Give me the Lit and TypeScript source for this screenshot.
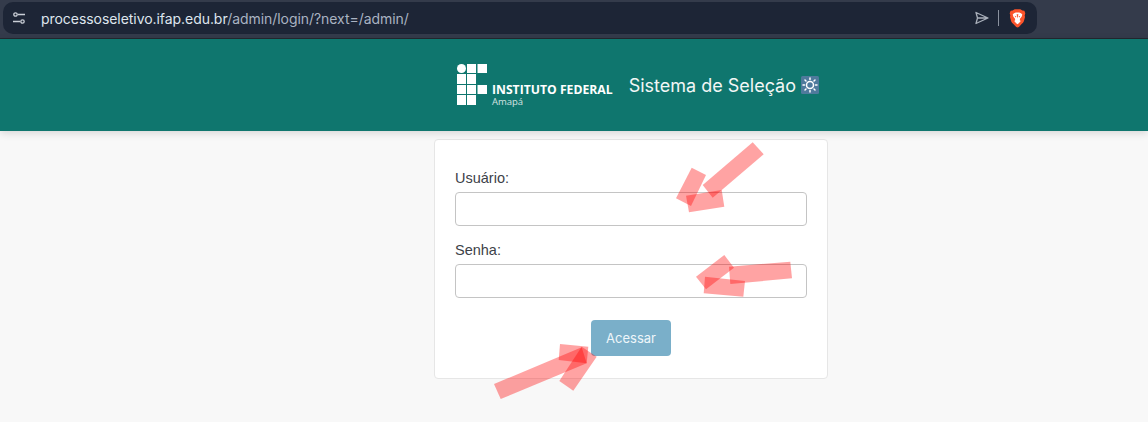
import { LitElement, html, css, svg } from "lit";
import { customElement } from "lit/decorators.js";

const arrows: string[] = [
  "752.7,142.3 763.7,154.3 712.7,197.7 702.7,185",
  "691.7,167.7 706,175 691,206 676,198.3",
  "686,195.7 721.7,190 724.3,206.7 689,212.3",
  "729,266.7 790.3,261.7 792,278.3 730.3,284",
  "724.3,255 734,267.7 706,289.3 696,276.7",
  "705,276.7 745,281 743.3,296.7 703.7,293.3",
  "494,384 581.7,347.3 586.7,363.3 500.7,399",
  "560,344 588.3,346.7 586.7,363.3 558.7,360",
  "581.7,346.7 596.7,356.7 573.3,390.7 559.3,381",
];

@customElement("app-root")
export class AppRoot extends LitElement {
  static styles = css`
    :host { display: block; position: relative; width: 1148px; height: 422px; overflow: hidden; background: #f8f8f8; font-family: Inter, "Liberation Sans", sans-serif; }
    .chrome { background: #343b4b; padding: 2px 111px 0 3px; box-sizing: border-box; border-bottom: 1px solid #23282f; height: 39px; }
    .pill { height: 32px; background: #1d2536; border-radius: 10px; display: flex; align-items: center; padding: 0 11px 0 10px; font-size: 14px; letter-spacing: -.055px; color: #aab3c2; }
    .tune { width: 12px; height: 14px; margin-right: 16px; flex: none; }
    .host { color: #dfe5ee; }
    .url { flex: 1; white-space: nowrap; }
    .send { width: 14px; height: 14px; flex: none; }
    .sep { width: 1px; height: 16px; background: #8a919e; margin: 0 10px 0 9px; flex: none; }
    .brave { width: 17px; height: 19px; flex: none; }
    header { height: 92px; background: #0f766e; display: flex; align-items: center; justify-content: center; gap: 16px; box-shadow: 0 2px 8px rgba(0,0,0,.14); padding-left: 128px; box-sizing: border-box; position: relative; }
    .logo { display: flex; align-items: flex-start; gap: 5px; color: #fff; margin-bottom: 1px; }
    .logo-mark { width: 30px; height: 41px; display: block; }
    .logo-text { display: flex; flex-direction: column; height: 24px; margin: 20px 0 -3px; font-family: "Open Sans", sans-serif; }
    .if { font-weight: 700; font-size: 12.2px; line-height: 12px; white-space: nowrap; }
    .st { font-size: 9.5px; line-height: 12px; opacity: .8; }
    .title { display: flex; align-items: center; gap: 5px; font-size: 18px; color: #f2f7f6; white-space: nowrap; }
    .gear { width: 18px; height: 18px; display: block; }
    main { display: flex; justify-content: center; padding: 8px 0 0 114px; }
    .card { width: 394px; height: 240px; box-sizing: border-box; background: #fff; border: 1px solid #e6e6e6; border-radius: 4px; padding: 28px 20px 0; display: flex; flex-direction: column; }
    label { line-height: 20px; color: #3d4248; margin-bottom: 4px; font-family: "Liberation Sans", sans-serif; font-size: 14.5px; }
    .input { height: 34px; box-sizing: border-box; border: 1px solid #c4c4c4; border-radius: 4px; background: #fff; margin-bottom: 14px; }
    .actions { display: flex; justify-content: center; margin-top: 8px; }
    .btn { width: 80px; height: 36px; border-radius: 4px; background: #7aafc9; color: #eef6fa; font-size: 13px; display: flex; align-items: center; justify-content: center; }
    .overlay { position: absolute; inset: 0; width: 1148px; height: 422px; pointer-events: none; }
    .overlay polygon { fill: rgba(255, 0, 0, .36); }
  `;

  render() {
    return html`
      <div class="chrome">
        <div class="pill">
          <svg class="tune" viewBox="0 0 12 14" fill="none" stroke="#c9ced6" stroke-width="1.3">
            <circle cx="2.5" cy="3.5" r="1.7"></circle>
            <path d="M5 3.5h7M0 10.5h7"></path>
            <circle cx="9.5" cy="10.5" r="1.7"></circle>
          </svg>
          <span class="url"><span class="host">processoseletivo.ifap.edu.br</span>/admin/login/?next=/admin/</span>
          <svg class="send" viewBox="0 0 14 14" fill="none" stroke="#aab0bb" stroke-width="1.3" stroke-linejoin="round">
            <path d="M1 1.5 13 7 1 12.5 2.5 7ZM2.5 7H13"></path>
          </svg>
          <div class="sep"></div>
          <svg class="brave" viewBox="0 0 17 19">
            <path fill="#fb542b" d="M3.6 1.6 5.7.2h5.6l2.1 1.4 2 .1.9 2.5-.6 2.2.3 1.5-1 3.9c-.3 1.200-.9 2-1.900 2.800L9.900 18c-.8.600-1.900.600-2.700 0l-3.300-3.400c-1-.8-1.600-1.600-1.900-2.800l-1-3.900.3-1.500L.7 4.200l.9-2.500Z"></path>
            <path fill="#fff" d="M5 4.200 6.800 3.600h3.400l1.800.6 1.300 1.300-.7 2.300-1.600 2-.2 1.500 1 .7-2 2.300-1.300.9-1.300-.9-2-2.300 1-.7-.2-1.500-1.600-2-.7-2.300Z"></path>
            <path fill="#fb542b" d="M5.600 6.800 7.500 7.600 6.600 8.500ZM11.400 6.800 9.500 7.600 10.400 8.500ZM7.600 5.200h1.800L8.500 9.500Z"></path>
          </svg>
        </div>
      </div>
      <header>
        <div class="logo">
          <svg class="logo-mark" viewBox="0 0 30 41" fill="#fff">
            <circle cx="4.500" cy="4.500" r="4.500"></circle>
            <rect x="10" y="0" width="9" height="9"></rect><rect x="20.500" y="0" width="9.500" height="9"></rect>
            <rect x="0" y="10" width="9" height="10"></rect><rect x="10" y="10" width="9" height="10"></rect>
            <rect x="0" y="21" width="9" height="9"></rect><rect x="10" y="21" width="9" height="9"></rect><rect x="20.500" y="21" width="9.500" height="9"></rect>
            <rect x="0" y="31" width="9" height="10"></rect><rect x="10" y="31" width="9" height="10"></rect>
          </svg>
          <div class="logo-text">
            <span class="if">INSTITUTO FEDERAL</span>
            <span class="st">Amapá</span>
          </div>
        </div>
        <div class="title">
          Sistema de Seleção
          <svg class="gear" viewBox="0 0 18 18">
            <rect width="18" height="18" rx="1.500" fill="#4f7a9c"></rect>
            <circle cx="9" cy="9" r="3.500" fill="none" stroke="#fff" stroke-width="1.500"></circle>
            <path stroke="#fff" stroke-width="1.500" stroke-linecap="round" d="M9 2v1.500M9 14.500V16M2 9h1.500M14.500 9H16M4 4l1 1M13 13l1 1M14 4l-1 1M5 13l-1 1"></path>
          </svg>
        </div>
      </header>
      <main>
        <div class="card">
          <label>Usuário:</label>
          <div class="input"></div>
          <label>Senha:</label>
          <div class="input"></div>
          <div class="actions"><div class="btn">Acessar</div></div>
        </div>
      </main>
      <svg class="overlay" viewBox="0 0 1148 422">
        ${arrows.map((p) => svg`<polygon points=${p}></polygon>`)}
      </svg>
    `;
  }
}
